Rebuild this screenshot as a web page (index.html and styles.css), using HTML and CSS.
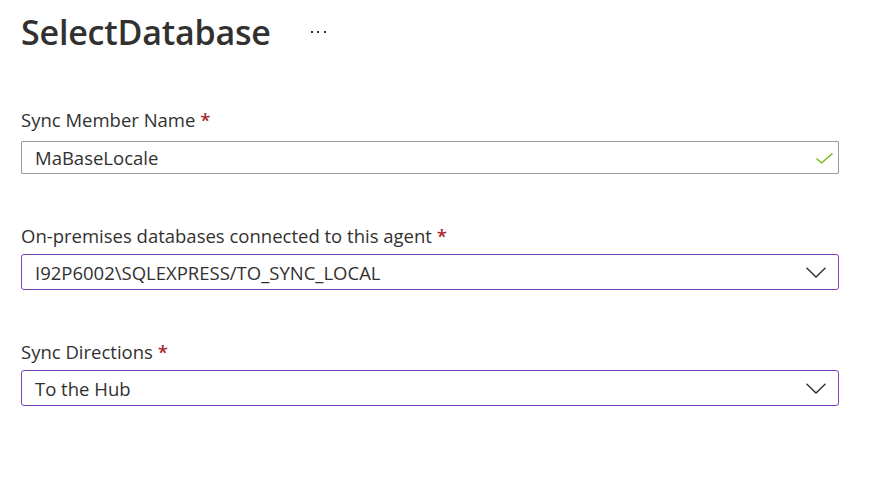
FILE: index.html
```html
<!DOCTYPE html>
<html lang="en">
<head>
<meta charset="utf-8">
<title>SelectDatabase</title>
<link rel="stylesheet" href="styles.css">
</head>
<body>
<div class="page">
  <header class="title-row">
    <h1 class="title">SelectDatabase</h1>
    <button class="more" aria-label="More actions"><span></span><span></span><span></span></button>
  </header>

  <div class="field field-first">
    <label class="label">Sync Member Name <span class="req">*</span></label>
    <div class="box box-valid">
      <span class="value">MaBaseLocale</span>
      <svg class="check" width="17" height="11" viewBox="0 0 17 11"><polyline points="0.5,5.5 5.5,10 16.5,0.5" fill="none" stroke="#6bb200" stroke-width="1.2"/></svg>
    </div>
  </div>

  <div class="field">
    <label class="label">On-premises databases connected to this agent <span class="req">*</span></label>
    <div class="box box-select">
      <span class="value">I92P6002\SQLEXPRESS/TO_SYNC_LOCAL</span>
      <svg class="chev" width="20" height="11" viewBox="0 0 20 11"><polyline points="0.5,0.8 10,10 19.5,0.8" fill="none" stroke="#323130" stroke-width="1.4"/></svg>
    </div>
  </div>

  <div class="field">
    <label class="label">Sync Directions <span class="req">*</span></label>
    <div class="box box-select">
      <span class="value">To the Hub</span>
      <svg class="chev" width="20" height="11" viewBox="0 0 20 11"><polyline points="0.5,0.8 10,10 19.5,0.8" fill="none" stroke="#323130" stroke-width="1.4"/></svg>
    </div>
  </div>
</div>
</body>
</html>
```

FILE: styles.css
```css
html, body {
  margin: 0;
  padding: 0;
  background: #ffffff;
}

body {
  font-family: "Open Sans", "Noto Sans", sans-serif;
  color: #323130;
}

.page {
  padding: 9px 51px 0 21px;
  display: flex;
  flex-direction: column;
}

.title-row {
  display: flex;
  align-items: center;
  height: 46px;
}

.title {
  margin: 0;
  font-size: 34px;
  line-height: 46px;
  font-weight: 600;
  color: #323130;
  letter-spacing: -0.2px;
}

.more {
  display: flex;
  align-items: center;
  gap: 4.5px;
  margin-left: 40px;
  padding: 0;
  border: 0;
  background: transparent;
  height: 20px;
  margin-top: 0;
}

.more span {
  width: 2px;
  height: 2px;
  background: #323130;
  display: block;
}

.field {
  display: flex;
  flex-direction: column;
  margin-top: 49px;
}

.field-first {
  margin-top: 52px;
}

.label {
  font-size: 18.5px;
  line-height: 25px;
  height: 25px;
  color: #323130;
}

.req {
  color: #a4262c;
  font-weight: 600;
}

.box {
  display: flex;
  align-items: center;
  justify-content: space-between;
  box-sizing: border-box;
  margin-top: 6px;
  height: 36px;
  padding: 0 12px 0 13px;
  font-size: 18.5px;
  color: #323130;
}

.box-valid {
  margin-top: 9px;
  height: 33px;
  border: 1.5px solid #9e9c9a;
  border-radius: 1px;
  padding-right: 5px;
}

.box-select {
  border: 1.5px solid #7e42bf;
  border-radius: 3px;
}

.value {
  white-space: nowrap;
}

.check {
  display: block;
  margin-top: 2px;
}

.chev {
  display: block;
}
```
